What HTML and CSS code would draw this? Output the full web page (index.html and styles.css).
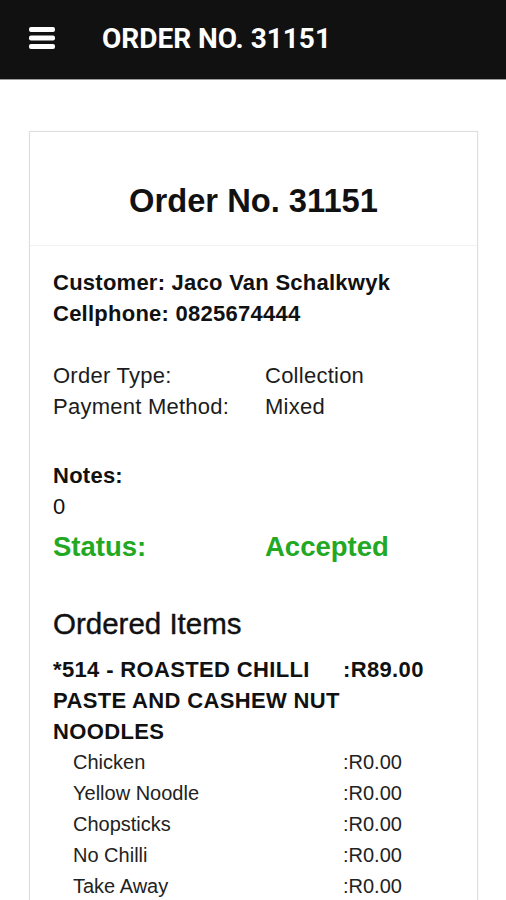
FILE: index.html
```html
<!DOCTYPE html>
<html>
<head>
<meta charset="utf-8">
<title>Order No. 31151</title>
<link rel="stylesheet" href="styles.css">
</head>
<body>
<header class="topbar">
  <svg class="menu-icon" width="26" height="23" viewBox="0 0 26 23" aria-hidden="true">
    <rect x="0" y="0" width="26" height="5" rx="2" fill="#fff"/>
    <rect x="0" y="8.5" width="26" height="5" rx="2" fill="#fff"/>
    <rect x="0" y="17" width="26" height="5" rx="2" fill="#fff"/>
  </svg>
  <h1 class="topbar-title">ORDER NO. 31151</h1>
</header>
<main class="page">
  <section class="card">
    <div class="card-head">
      <h2 class="card-title">Order No. 31151</h2>
    </div>
    <div class="card-body">
      <div class="block bold">
        <div>Customer: Jaco Van Schalkwyk</div>
        <div>Cellphone: 0825674444</div>
      </div>
      <div class="block pairs">
        <span>Order Type:</span><span>Collection</span>
        <span>Payment Method:</span><span>Mixed</span>
      </div>
      <div class="block notes">
        <div class="bold">Notes:</div>
        <div>0</div>
      </div>
      <div class="status pairs">
        <span>Status:</span><span>Accepted</span>
      </div>
      <h3 class="items-title">Ordered Items</h3>
      <div class="item">
        <div class="item-name">*514 - ROASTED CHILLI PASTE AND CASHEW NUT NOODLES</div>
        <div class="item-price">:R89.00</div>
      </div>
      <ul class="extras">
        <li><span>Chicken</span><span>:R0.00</span></li>
        <li><span>Yellow Noodle</span><span>:R0.00</span></li>
        <li><span>Chopsticks</span><span>:R0.00</span></li>
        <li><span>No Chilli</span><span>:R0.00</span></li>
        <li><span>Take Away</span><span>:R0.00</span></li>
      </ul>
    </div>
  </section>
</main>
</body>
</html>
```
FILE: styles.css
```css
* { box-sizing: border-box; }
html, body { margin: 0; padding: 0; background: #fff; }
body {
  font-family: "Liberation Sans", Arial, sans-serif;
  color: #111;
  width: 506px;
  height: 900px;
  overflow: hidden;
}
.topbar {
  height: 80px;
  background: #111;
  border-bottom: 1px solid #9c9c9c;
  display: flex;
  align-items: center;
  padding-left: 29px;
  padding-bottom: 2px;
}
.menu-icon { display: block; flex: none; }
.topbar-title {
  margin: 0 0 0 47px;
  font-family: Roboto, "Liberation Sans", sans-serif;
  font-weight: 700;
  font-size: 28px;
  color: #fff;
}
.page {
  padding: 51px 28px 0 29px;
}
.card {
  border: 1px solid #dedede;
  border-bottom: none;
  box-shadow: 0 0 2px rgba(0,0,0,0.06);
  height: 800px;
}
.card-head {
  padding: 50px 0 26px;
  border-bottom: 1px solid #f2f2f2;
  text-align: center;
}
.card-title {
  margin: 0;
  font-size: 32.7px;
  font-weight: 700;
  line-height: 37px;
}
.card-body {
  padding: 21px 23px 0;
  font-size: 22px;
  line-height: 31px;
  letter-spacing: 0.25px;
}
.bold { font-weight: 700; }
.block + .block { margin-top: 31px; }
.block.notes { margin-top: 38px; color: #111; }
.pairs {
  display: grid;
  grid-template-columns: 212px auto;
  color: #1c1c1c;
}
.status {
  margin-top: 9px;
  font-size: 27.5px;
  font-weight: 700;
  color: #22a822;
  line-height: 31px;
  letter-spacing: 0;
}
.status span { color: #22a822; }
.items-title {
  margin: 45px 0 0;
  font-size: 29.5px;
  font-weight: 400;
  line-height: 34px;
  letter-spacing: 0;
  color: #111;
  -webkit-text-stroke: 0.4px #111;
}
.item {
  margin-top: 13px;
  display: grid;
  grid-template-columns: 290px auto;
  font-weight: 700;
  letter-spacing: 0.35px;
}
.extras {
  list-style: none;
  margin: 0;
  padding: 0;
  font-size: 20px;
  line-height: 31px;
  letter-spacing: 0;
  color: #222;
}
.extras li {
  display: grid;
  grid-template-columns: 270px auto;
  padding-left: 20px;
}
```
